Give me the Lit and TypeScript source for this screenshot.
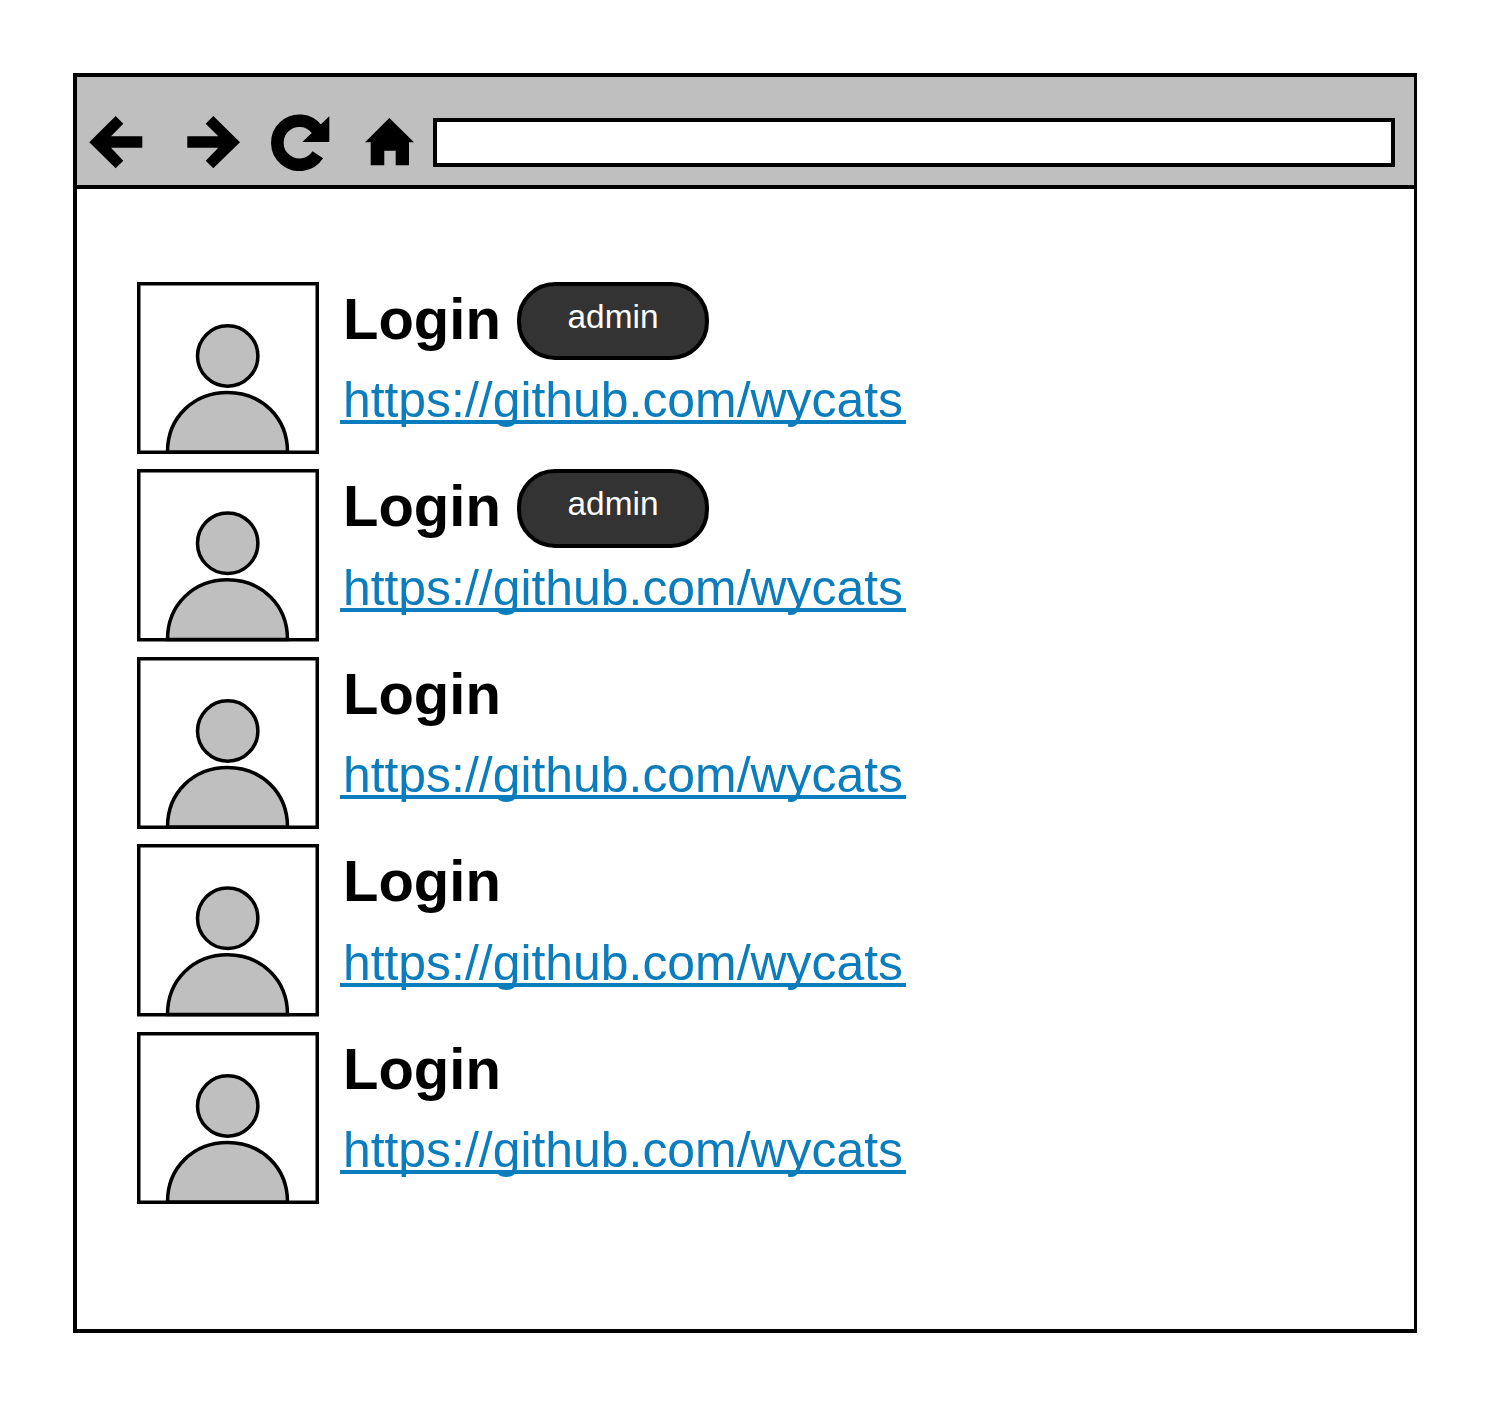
import { LitElement, html, css, svg } from "lit";
import { customElement } from "lit/decorators.js";

const avatar = svg`
  <rect x="1.75" y="1.75" width="178.5" height="168.5" fill="#fff" stroke="#000" stroke-width="3.5"/>
  <path d="M30.5 170 C30.5 135 57 110.5 90.5 110.5 C124 110.5 150.5 135 150.5 170 Z" fill="#bfbfbf" stroke="#000" stroke-width="3.5"/>
  <circle cx="90.7" cy="74" r="30.2" fill="#bfbfbf" stroke="#000" stroke-width="3.5"/>`;

const rows = [true, true, false, false, false];

@customElement("app-root")
export class AppRoot extends LitElement {
  static styles = css`
    :host { display: block; width: 1491px; height: 1406px; padding: 73px 74px 73px 73px; box-sizing: border-box; background: #fff; font-family: "Liberation Sans", Arial, sans-serif; }
    .window { height: 1260px; border: 4px solid #000; border-right-width: 3px; box-sizing: border-box; display: flex; flex-direction: column; }
    .toolbar { height: 112px; flex: none; box-sizing: border-box; background: #bfbfbf; border-bottom: 4px solid #000; position: relative; display: flex; align-items: flex-start; padding: 38px 0 0 12px; }
    .toolbar svg { display: block; flex: none; }
    .fwd { margin-left: 44px; }
    .reload { margin-left: 30px; margin-top: -2px; }
    .home { margin-left: 34px; margin-top: 3px; }
    .address { margin-left: 18px; margin-top: 3px; width: 962px; height: 49px; box-sizing: border-box; border: 4px solid #000; background: #fff; }
    .list { display: flex; flex-direction: column; gap: 15px; padding: 92.75px 0 0 60px; }
    .row { display: flex; height: 172.5px; }
    .thumb { display: block; flex: none; width: 182px; height: 172.5px; overflow: visible; }
    .row:nth-child(odd) .thumb { height: 172px; }
    .info { margin-left: 21px; display: flex; flex-direction: column; align-items: flex-start; }
    .head { display: flex; align-items: flex-start; height: 79px; }
    .login { font-size: 58px; font-weight: 700; line-height: 74px; color: #000; margin-left: 3px; }
    .pill { margin-left: 16.5px; width: 191.3px; height: 78.5px; box-sizing: border-box; border: 4px solid #000; border-radius: 38px; background: #333; color: #fff; font-size: 33.4px; line-height: 61px; text-align: center; }
    .link { margin-top: 19.25px; display: block; padding: 0 3.2px 0 2.9px; font-size: 49.9px; line-height: 40px; color: #0b7dbd; border-bottom: 4px solid #0b7dbd; text-decoration: none; }
  `;

  render() {
    return html`<div class="window">
      <div class="toolbar">
        <svg class="back" width="54" height="54" viewBox="89 115 54 54"><path d="M89.3 142.3L115.7 116L123.3 123.7L111 136.3H142.3V147.7H111L123.3 160.7L115.7 168.3Z"/></svg>
        <svg class="fwd" width="54" height="54" viewBox="187 115 54 54"><path d="M240 142.3L213.3 116L205.7 123.7L218.3 136.3H187.3V147.7H218.3L205.7 160.7L213.3 168.3Z"/></svg>
        <svg class="reload" width="60" height="58" viewBox="271 113 60 58"><path d="M317.8 154.7A22 22 0 1 1 317 129.6" fill="none" stroke="#000" stroke-width="12.6"/><path d="M329.3 116.3V142H302.3Z"/></svg>
        <svg class="home" width="50" height="48" viewBox="365 118 50 48"><path d="M389.3 118L414 142.3H409V165.3H395.7V150.7H384.3V165.3H370.7V142.3H365Z"/></svg>
        <div class="address"></div>
      </div>
      <div class="list">
        ${rows.map((admin) => html`<div class="row">
          <svg class="thumb" viewBox="0 0 182 172" preserveAspectRatio="none">${avatar}</svg>
          <div class="info">
            <div class="head"><span class="login">Login</span>${admin ? html`<span class="pill">admin</span>` : ""}</div>
            <a class="link" href="#">https://github.com/wycats</a>
          </div>
        </div>`)}
      </div>
    </div>`;
  }
}
